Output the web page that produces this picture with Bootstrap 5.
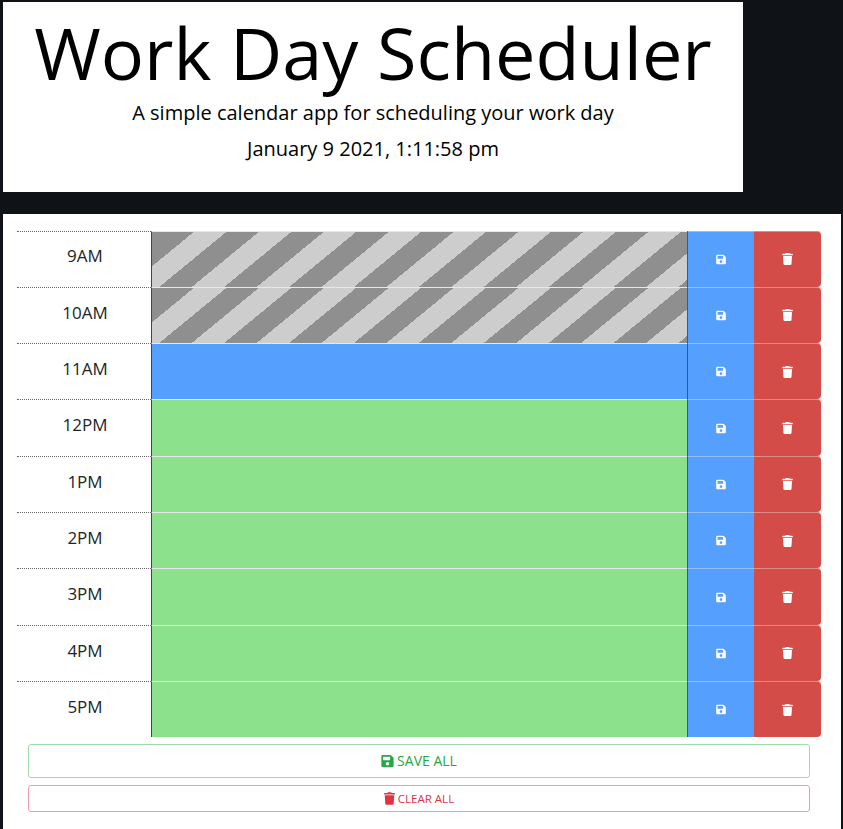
<!DOCTYPE html>
<html lang="en">
<head>
  <meta charset="UTF-8">
  <meta name="viewport" content="width=device-width, initial-scale=1">
  <title>Work Day Scheduler</title>
  <link href="https://cdn.jsdelivr.net/npm/bootstrap@5.3.0/dist/css/bootstrap.min.css" rel="stylesheet">
  <style>
    html, body { height: 100%; }
    body { background: #0f1318; font-family: "Open Sans", sans-serif; color: #212529; padding: 2px 2px 0 3px; overflow: hidden; }
    .page-head { width: 740px; height: 190px; padding-top: 7px; }
    .page-title { font-size: 72px; line-height: 86.4px; font-weight: 400; color: #000; margin: 0; }
    .page-sub { font-size: 20px; line-height: 30px; color: #000; margin: 3px 0 0; }
    .page-date { font-size: 20px; line-height: 30px; color: #000; margin: 6px 0 0; }
    .sched { margin-top: 22px; height: 615px; padding: 16.5px 20px 0 14px; }
    .hour-row { height: 56.33px; }
    .hour-label { width: 134px; border-top: 1px dotted #666; font-size: 17px; padding: 0 0 6px 2px; }
    .hour-text { flex: 1; border-left: 1px solid #444; border-top: 1px solid #e8e8e8; box-shadow: 1px 0 0 rgba(50,70,100,.6); position: relative; z-index: 1; }
    .hour-past { background: linear-gradient(140.6deg, #8f8f8f 0 6px, transparent 6px), repeating-linear-gradient(140.6deg, #cdcdcd 0 5.9px, #8f8f8f 5.9px 26.5px, #cdcdcd 26.5px 41.2px); }
    .hour-now { background: #559fff; }
    .hour-next { background: #8ce28c; }
    .hour-btn { width: 67px; border: 0; border-radius: 0; color: #fff; padding: 1px 0 0; }
    .hour-save { background: #559fff; box-shadow: inset 0 1px 0 rgba(255,255,255,.35), inset 1px 0 0 rgba(50,70,100,.45); }
    .hour-del { background: #d44c48; border-radius: 0 4px 4px 0; box-shadow: inset 0 1px 0 rgba(255,255,255,.35); }
    .hour-btn svg { width: 10px; height: 11px; fill: #fff; }
    .hour-del svg { width: 11px; height: 12px; }
    .all-wrap { padding: 7px 11px 0; }
    .all-btn { width: 100%; background: #fff; display: flex; align-items: center; justify-content: center; gap: 3px; padding: 0 0 1px; border-radius: 3px; }
    .all-save { height: 34px; border: 1px solid #9bdcab; color: #28a745; font-size: 14px; margin-bottom: 7px; }
    .all-save svg { width: 13px; height: 14px; fill: #28a745; }
    .all-clear { height: 27px; border: 1px solid #f19ca4; color: #dc3545; font-size: 11.5px; }
    .all-clear svg { width: 11px; height: 13px; fill: #dc3545; }
  </style>
</head>
<body>
  <svg width="0" height="0" class="d-block">
    <symbol id="ic-save" viewBox="0 0 448 512"><path d="M433.941 129.941l-83.882-83.882A48 48 0 0 0 316.118 32H48C21.49 32 0 53.49 0 80v352c0 26.51 21.49 48 48 48h352c26.51 0 48-21.49 48-48V163.882a48 48 0 0 0-14.059-33.941zM224 416c-35.346 0-64-28.654-64-64 0-35.346 28.654-64 64-64s64 28.654 64 64c0 35.346-28.654 64-64 64zm96-304.52V212c0 6.627-5.373 12-12 12H76c-6.627 0-12-5.373-12-12V108c0-6.627 5.373-12 12-12h228.52c3.183 0 6.235 1.264 8.485 3.515l3.48 3.48A11.996 11.996 0 0 1 320 111.48z"/></symbol>
    <symbol id="ic-trash" viewBox="0 0 448 512"><path d="M432 32H312l-9.4-18.7A24 24 0 0 0 281.1 0H166.8a23.72 23.72 0 0 0-21.4 13.3L136 32H16A16 16 0 0 0 0 48v32a16 16 0 0 0 16 16h416a16 16 0 0 0 16-16V48a16 16 0 0 0-16-16zM53.2 467a48 48 0 0 0 47.9 45h245.8a48 48 0 0 0 47.9-45L416 128H32z"/></symbol>
  </svg>

  <header class="page-head bg-white text-center">
    <h1 class="page-title">Work Day Scheduler</h1>
    <p class="page-sub">A simple calendar app for scheduling your work day</p>
    <p class="page-date">January 9 2021, 1:11:58 pm</p>
  </header>

  <main class="sched bg-white">
    <div id="hours"></div>
    <div class="all-wrap">
      <button type="button" class="btn all-btn all-save"><svg><use href="#ic-save"/></svg>SAVE ALL</button>
      <button type="button" class="btn all-btn all-clear"><svg><use href="#ic-trash"/></svg>CLEAR ALL</button>
    </div>
  </main>

  <script>
    // one row per hour, colour comes from where it sits against "now" (11AM)
    var hours = ['9AM', '10AM', '11AM', '12PM', '1PM', '2PM', '3PM', '4PM', '5PM'];
    var html = '';
    hours.forEach(function (h, i) {
      var state = i < 2 ? 'hour-past' : (i === 2 ? 'hour-now' : 'hour-next');
      html += '<div class="hour-row d-flex">' +
        '<div class="hour-label d-flex align-items-center justify-content-center">' + h + '</div>' +
        '<div class="hour-text ' + state + '"></div>' +
        '<button type="button" class="btn hour-btn hour-save d-flex align-items-center justify-content-center"><svg><use href="#ic-save"/></svg></button>' +
        '<button type="button" class="btn hour-btn hour-del d-flex align-items-center justify-content-center"><svg><use href="#ic-trash"/></svg></button>' +
        '</div>';
    });
    document.getElementById('hours').innerHTML = html;
  </script>
  <script src="https://cdn.jsdelivr.net/npm/bootstrap@5.3.0/dist/js/bootstrap.bundle.min.js"></script>
</body>
</html>
